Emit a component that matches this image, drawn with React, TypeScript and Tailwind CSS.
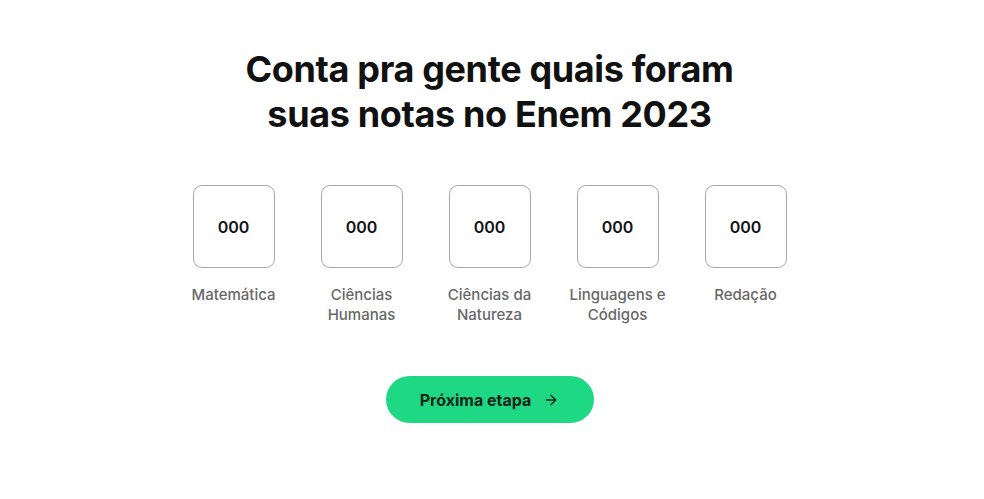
import React from "react";
import { ArrowRight } from "lucide-react";

const subjects = [
  ["Matemática"],
  ["Ciências", "Humanas"],
  ["Ciências da", "Natureza"],
  ["Linguagens e", "Códigos"],
  ["Redação"],
];

export default function App() {
  return (
    <div
      className="w-[984px] h-[499px] bg-white flex flex-col items-center pr-[5px]"
      style={{ fontFamily: "Inter, 'Noto Sans', sans-serif" }}
    >
      <h1 className="mt-[47px] text-center text-[36px] leading-[45px] font-bold tracking-[-0.01em] text-[#111111]">
        Conta pra gente quais foram
        <br />
        suas notas no Enem 2023
      </h1>

      <div className="mt-[48px] flex gap-[46px]">
        {subjects.map((lines, i) => (
          <div key={i} className="flex flex-col items-center w-[82px]">
            <div className="w-[82px] h-[83px] rounded-[9px] border border-[#a8a8a8] flex items-center justify-center text-[16px] font-semibold text-[#111111]">
              000
            </div>
            <div className="mt-[17px] text-center text-[15px] leading-[20px] font-medium text-[#686868] whitespace-nowrap">
              {lines.map((l, j) => (
                <div key={j}>{l}</div>
              ))}
            </div>
          </div>
        ))}
      </div>

      <button className="mt-[51px] w-[208px] h-[47px] rounded-full bg-[#1fd883] flex items-center justify-center gap-3 text-[16px] font-bold text-[#0d2418]">
        Próxima etapa
        <ArrowRight className="w-4 h-4" strokeWidth={2} />
      </button>
    </div>
  );
}
